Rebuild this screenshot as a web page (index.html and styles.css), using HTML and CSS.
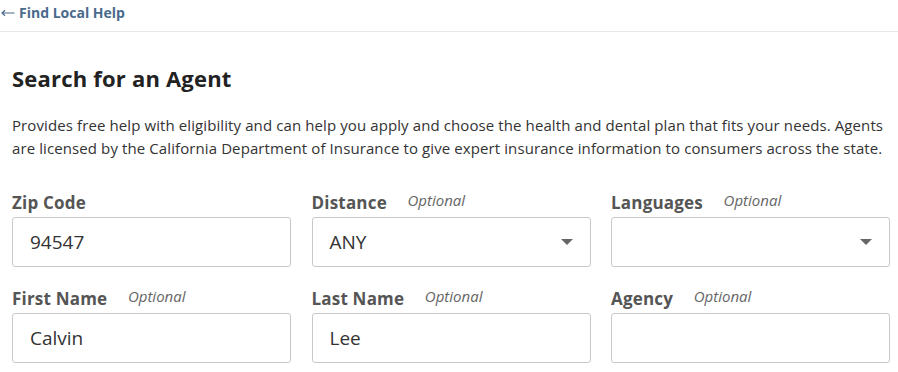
FILE: index.html
```html
<!DOCTYPE html>
<html lang="en">
<head>
  <meta charset="UTF-8" />
  <title>Search for an Agent</title>
  <link rel="stylesheet" href="styles.css">
</head>
<body>
  <nav class="crumb">
    <a href="#" class="back-link">
      <svg class="arrow" width="14" height="8" viewBox="0 0 14 8" aria-hidden="true">
        <path d="M13.5 4H1.2M4 1.2L1 4l3 2.8" fill="none" stroke="currentColor" stroke-width="1.2" />
      </svg>
      Find Local Help
    </a>
  </nav>

  <main class="container">
    <h1>Search for an Agent</h1>
    <p class="intro">Provides free help with eligibility and can help you apply and choose the health and dental plan that fits your needs. Agents are licensed by the California Department of Insurance to give expert insurance information to consumers across the state.</p>

    <form class="search-grid">
      <div class="field">
        <label for="zip">Zip Code</label>
        <input type="text" id="zip" value="94547" />
      </div>
      <div class="field">
        <label for="distance">Distance <span class="optional">Optional</span></label>
        <div class="select-box" id="distance">
          <span class="select-value">ANY</span>
          <span class="caret"></span>
        </div>
      </div>
      <div class="field">
        <label for="languages">Languages <span class="optional">Optional</span></label>
        <div class="select-box" id="languages">
          <span class="select-value"></span>
          <span class="caret"></span>
        </div>
      </div>
      <div class="field">
        <label for="first">First Name <span class="optional">Optional</span></label>
        <input type="text" id="first" value="Calvin" />
      </div>
      <div class="field">
        <label for="last">Last Name <span class="optional">Optional</span></label>
        <input type="text" id="last" value="Lee" />
      </div>
      <div class="field">
        <label for="agency">Agency <span class="optional">Optional</span></label>
        <input type="text" id="agency" value="" />
      </div>
    </form>
  </main>
</body>
</html>
```

FILE: styles.css
```css
body {
  font-family: 'Open Sans', sans-serif;
  margin: 0;
  padding: 0;
  background: #fff;
  color: #333;
}

.crumb {
  height: 31px;
  border-bottom: 1px solid #e8e8e8;
  padding-left: 1px;
}

.back-link {
  display: inline-flex;
  align-items: center;
  gap: 4px;
  font-size: 14px;
  font-weight: 700;
  color: #4a6b8c;
  text-decoration: none;
  line-height: 20px;
}

.back-link .arrow {
  margin-top: 1px;
}

.container {
  padding: 0 6px 0 12px;
}

h1 {
  margin: 31px 0 0;
  font-size: 22px;
  font-weight: 700;
  color: #222;
  line-height: 30px;
  letter-spacing: 0.2px;
}

.intro {
  margin: 21px 0 0;
  font-size: 15px;
  line-height: 23px;
  color: #333;
  letter-spacing: 0.1px;
}

.search-grid {
  display: grid;
  grid-template-columns: repeat(3, 279px);
  column-gap: 20.5px;
  row-gap: 20px;
  margin-top: 31px;
}

.field label {
  display: block;
  font-size: 17px;
  font-weight: 700;
  color: #555;
  line-height: 24px;
  margin-bottom: 2px;
  letter-spacing: 0.2px;
}

.optional {
  margin-left: 16px;
  font-size: 15px;
  font-weight: 400;
  font-style: italic;
  color: #666;
  letter-spacing: 0;
  position: relative;
  top: -3px;
}

input[type="text"],
.select-box {
  box-sizing: border-box;
  width: 279px;
  height: 50px;
  padding: 0 17px;
  border: 1px solid #c8c8c8;
  border-radius: 3px;
  font-family: 'Open Sans', sans-serif;
  font-size: 19px;
  color: #333;
  background: #fff;
}

.select-box {
  display: flex;
  align-items: center;
  justify-content: space-between;
}

.caret {
  width: 0;
  height: 0;
  border-left: 6px solid transparent;
  border-right: 6px solid transparent;
  border-top: 6px solid #666;
}
```
